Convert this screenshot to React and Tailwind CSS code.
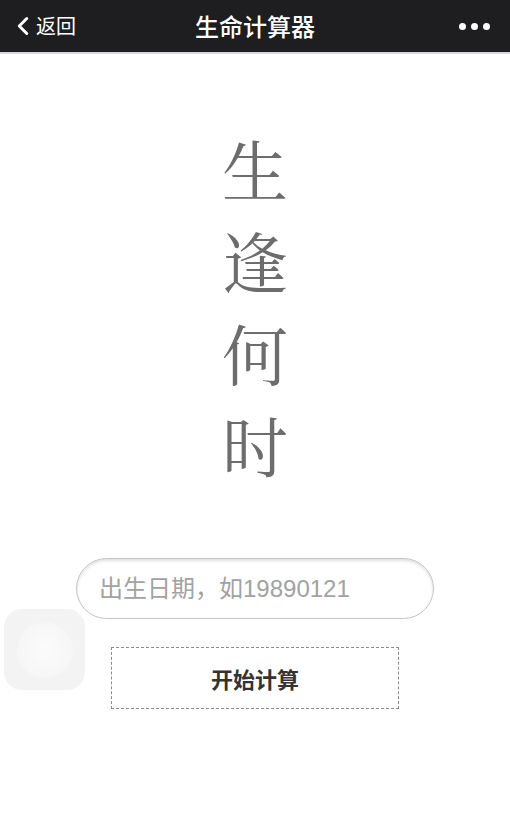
import { ChevronLeft } from 'lucide-react';

const sans = { fontFamily: '"Noto Sans CJK SC", "Liberation Sans", sans-serif' };
const latinFirst = { fontFamily: '"Liberation Sans", "Noto Sans CJK SC", sans-serif' };

export default function App() {
    const words = ['生', '逢', '何', '时'];

    return (
        <div className="relative w-[510px] h-[817px] bg-white overflow-hidden" style={sans}>
            <div className="h-[54px] bg-[#1e1e21] border-b-2 border-[#d9d9d9] flex items-center justify-between px-[12px] text-white">
                <div className="flex items-center w-[100px]">
                    <ChevronLeft size={30} strokeWidth={2.4} className="-ml-[4px]" />
                    <span className="text-[20px] -ml-[2px]">返回</span>
                </div>
                <div className="text-[24px] font-medium">生命计算器</div>
                <div className="w-[100px] flex justify-end gap-[5px] pr-[8px]">
                    <span className="size-[7px] rounded-full bg-white" />
                    <span className="size-[7px] rounded-full bg-white" />
                    <span className="size-[7px] rounded-full bg-white" />
                </div>
            </div>

            <div
                className="flex flex-col items-center pt-[68px] text-[66px] leading-[92px] text-[#6d6d6d]"
                style={{ fontFamily: '"Noto Serif CJK SC", "Noto Sans CJK SC", serif' }}
            >
                {words.map((w) => (
                    <div key={w}>{w}</div>
                ))}
            </div>

            <div className="flex flex-col items-center mt-[68px]">
                <div
                    className="w-[358px] h-[61px] rounded-full border border-[#c4c4c4] shadow-[inset_0_2px_3px_rgba(0,0,0,0.12)] flex items-center px-[22px] text-[24px] text-[#a2a2a2]"
                    style={latinFirst}
                >
                    出生日期，如19890121
                </div>
                <div className="mt-[28px] w-[288px] h-[62px] border border-dashed border-[#8a8a8a] flex items-center justify-center text-[22px] font-bold text-[#333]">
                    开始计算
                </div>
            </div>

            <div className="absolute left-[4px] top-[609px] size-[81px] rounded-[18px] bg-[#f3f3f3] flex items-center justify-center">
                <div className="size-[56px] rounded-full bg-[radial-gradient(circle,#fbfbfb_0%,#f7f7f7_60%,#f3f3f3_100%)]" />
            </div>
        </div>
    );
}
